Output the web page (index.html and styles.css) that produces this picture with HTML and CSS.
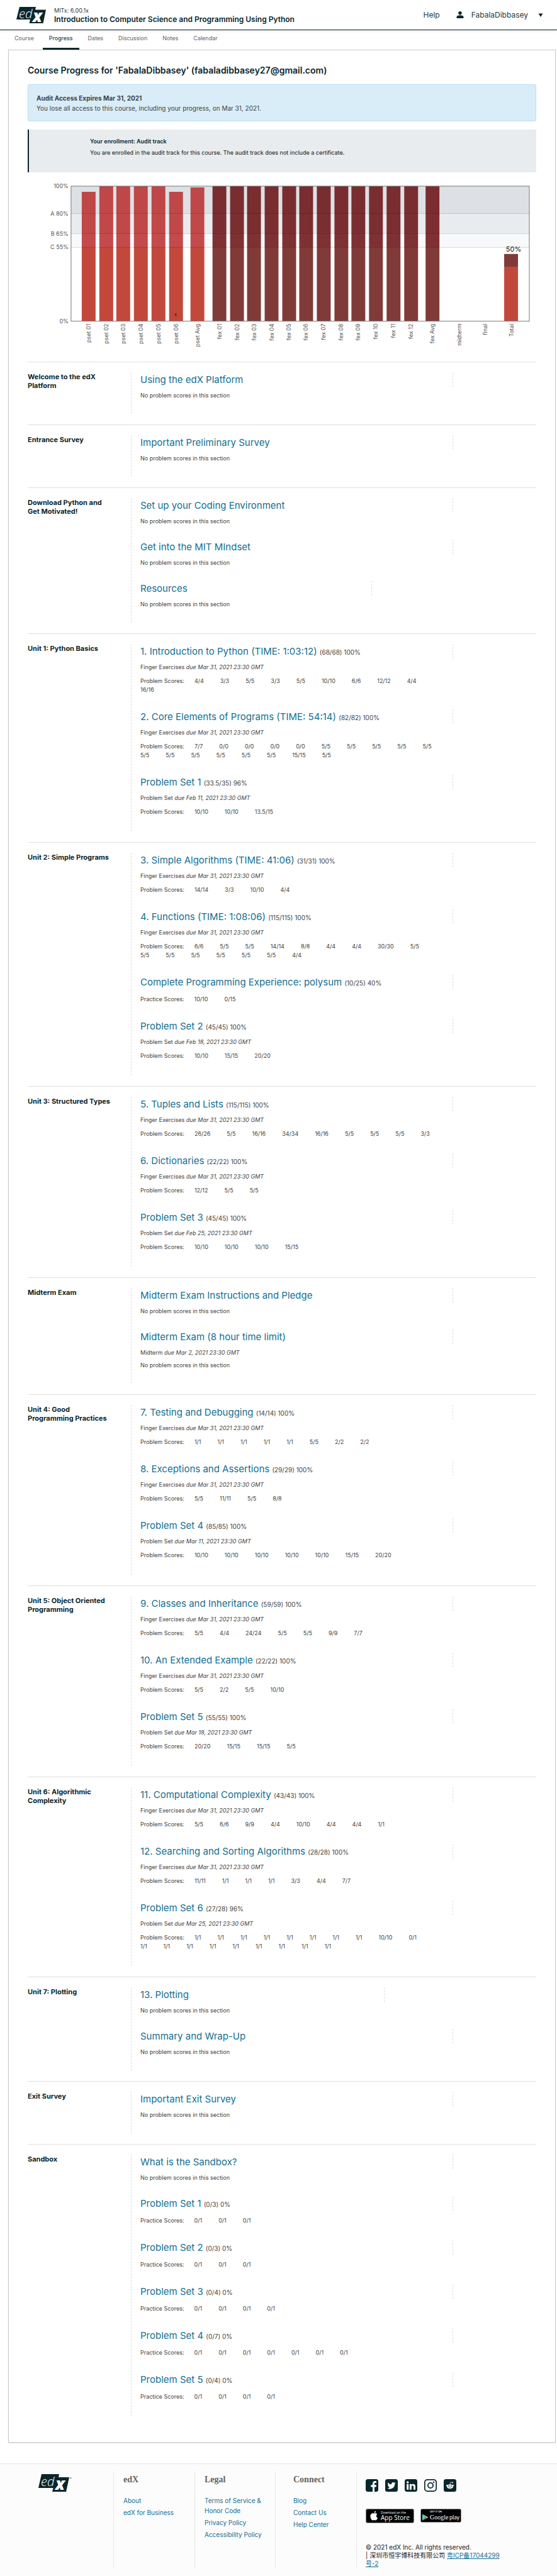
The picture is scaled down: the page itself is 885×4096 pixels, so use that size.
FILE: index.html
```html
<!DOCTYPE html>
<html lang="en">
<head>
<meta charset="utf-8">
<title>Progress | 6.00.1x | edX</title>
<meta name="viewport" content="width=device-width, initial-scale=1">
<link rel="stylesheet" href="styles.css">
</head>
<body>
<header class="site-header">
  <a class="logo" href="#" aria-label="edX home">
    <svg viewBox="0 0 47 26" width="47" height="26" aria-hidden="true">
      <path class="logo-shape" d="M5 0H31L30 4.500H47L42.500 26H20.500L22 20H0Z"/>
      <text class="logo-ed" x="4" y="17.500">ed</text>
      <text class="logo-x" x="26" y="23.500">x</text>
    </svg>
  </a>
  <div class="course-name">
    <span class="course-org">MITx: 6.00.1x</span>
    <span class="course-title">Introduction to Computer Science and Programming Using Python</span>
  </div>
  <a class="help" href="#">Help</a>
  <button class="user-menu" type="button">
    <svg viewBox="0 0 12 11" width="12" height="11" aria-hidden="true"><circle cx="6" cy="2.700" r="2.700"/><path d="M0.500 11V9C0.500 7 2.500 6.200 6 6.200S11.500 7 11.500 9V11Z"/></svg>
    <span>FabalaDibbasey</span>
    <svg class="caret" viewBox="0 0 8 6" width="8" height="6" aria-hidden="true"><path d="M0.500 0.500H7.500L4 6Z"/></svg>
  </button>
</header>
<nav class="tabs" aria-label="Course">
  <a href="#">Course</a>
  <a class="active" href="#" aria-current="page">Progress</a>
  <a href="#">Dates</a>
  <a href="#">Discussion</a>
  <a href="#">Notes</a>
  <a href="#">Calendar</a>
</nav>
<main class="panel">
  <h1>Course Progress for 'FabalaDibbasey' (fabaladibbasey27@gmail.com)</h1>
  <div class="alert">
    <strong>Audit Access Expires Mar 31, 2021</strong>
    <p>You lose all access to this course, including your progress, on Mar 31, 2021.</p>
  </div>
  <div class="enrollment">
    <h2>Your enrollment: Audit track</h2>
    <p>You are enrolled in the audit track for this course. The audit track does not include a certificate.</p>
  </div>
  <svg class="chart" viewBox="0 0 809 276" role="img" aria-label="Grade chart">
    <defs>
      <linearGradient id="red" gradientUnits="userSpaceOnUse" x1="0" y1="14" x2="0" y2="229">
        <stop offset=".2" stop-color="#bf4747"/><stop offset=".2" stop-color="#c14848"/><stop offset=".35" stop-color="#c14848"/><stop offset=".35" stop-color="#c44a4c"/><stop offset=".45" stop-color="#c44a4c"/><stop offset=".45" stop-color="#c3483c"/>
      </linearGradient>
      <linearGradient id="dark" gradientUnits="userSpaceOnUse" x1="0" y1="14" x2="0" y2="229">
        <stop offset=".2" stop-color="#792d2f"/><stop offset=".2" stop-color="#7b2e31"/><stop offset=".35" stop-color="#7b2e31"/><stop offset=".35" stop-color="#7f3033"/><stop offset=".45" stop-color="#7f3033"/><stop offset=".45" stop-color="#803b38"/>
      </linearGradient>
    </defs>
    <rect x="69" y="14" width="729" height="43" fill="#dde1e6"/>
    <rect x="69" y="57" width="729" height="32" fill="#e8ecee"/>
    <rect x="69" y="89" width="729" height="22" fill="#f8f9fb"/>
    <g fill="url(#red)">
      <rect x="86" y="23" width="22" height="206"/><rect x="114" y="14" width="22" height="215"/><rect x="141" y="14" width="22" height="215"/><rect x="169" y="14" width="22" height="215"/><rect x="197" y="14" width="22" height="215"/><rect x="225" y="23" width="22" height="206"/><rect x="259" y="16" width="22" height="213"/><rect x="758" y="143" width="22" height="86"/>
    </g>
    <g fill="url(#dark)">
      <rect x="294" y="14" width="22" height="215"/><rect x="322" y="14" width="22" height="215"/><rect x="349" y="14" width="22" height="215"/><rect x="377" y="14" width="22" height="215"/><rect x="405" y="14" width="22" height="215"/><rect x="432" y="14" width="22" height="215"/><rect x="460" y="14" width="22" height="215"/><rect x="488" y="14" width="22" height="215"/><rect x="515" y="14" width="22" height="215"/><rect x="543" y="14" width="22" height="215"/><rect x="571" y="14" width="22" height="215"/><rect x="599" y="14" width="22" height="215"/><rect x="633" y="14" width="22" height="215"/><rect x="758" y="122" width="22" height="21"/>
    </g>
    <path class="grid" d="M69 57.500H798M69 89.500H798M69 111.500H798"/>
    <rect class="frame" x="69" y="14" width="729" height="215"/>
    <path class="dropped" d="M234 216.500L237 220.500M237 216.500L234 220.500"/>
    <g class="axis">
      <text x="65" y="17">100%</text><text x="65" y="61">A 80%</text><text x="65" y="93">B 65%</text><text x="65" y="114">C 55%</text><text x="65" y="232">0%</text>
    </g>
    <g class="axis">
      <text transform="translate(100 233) rotate(-90)">pset 01</text><text transform="translate(128 233) rotate(-90)">pset 02</text><text transform="translate(155 233) rotate(-90)">pset 03</text><text transform="translate(183 233) rotate(-90)">pset 04</text><text transform="translate(211 233) rotate(-90)">pset 05</text><text transform="translate(239 233) rotate(-90)">pset 06</text><text transform="translate(273 233) rotate(-90)">pset Avg</text>
      <text transform="translate(308 233) rotate(-90)">fex 01</text><text transform="translate(336 233) rotate(-90)">fex 02</text><text transform="translate(363 233) rotate(-90)">fex 03</text><text transform="translate(391 233) rotate(-90)">fex 04</text><text transform="translate(419 233) rotate(-90)">fex 05</text><text transform="translate(446 233) rotate(-90)">fex 06</text><text transform="translate(474 233) rotate(-90)">fex 07</text><text transform="translate(502 233) rotate(-90)">fex 08</text><text transform="translate(529 233) rotate(-90)">fex 09</text><text transform="translate(557 233) rotate(-90)">fex 10</text><text transform="translate(585 233) rotate(-90)">fex 11</text><text transform="translate(613 233) rotate(-90)">fex 12</text><text transform="translate(647 233) rotate(-90)">fex Avg</text>
      <text transform="translate(690 233) rotate(-90)">midterm</text><text transform="translate(731 233) rotate(-90)">final</text><text transform="translate(773 233) rotate(-90)">Total</text>
    </g>
    <text class="total" x="773" y="118">50%</text>
  </svg>

  <section class="chapter">
    <h2>Welcome to the edX Platform</h2>
    <div class="chapter-body">
      <div class="item"><h3><a href="#">Using the edX Platform</a></h3><p class="none">No problem scores in this section</p></div>
    </div>
  </section>
  <section class="chapter">
    <h2>Entrance Survey</h2>
    <div class="chapter-body">
      <div class="item"><h3><a href="#">Important Preliminary Survey</a></h3><p class="none">No problem scores in this section</p></div>
    </div>
  </section>
  <section class="chapter">
    <h2>Download Python and <br>Get Motivated!</h2>
    <div class="chapter-body">
      <div class="item"><h3><a href="#">Set up your Coding Environment</a></h3><p class="none">No problem scores in this section</p></div>
      <div class="item"><h3><a href="#">Get into the MIT MIndset</a></h3><p class="none">No problem scores in this section</p></div>
      <div class="item"><h3 class="short"><a href="#">Resources</a></h3><p class="none">No problem scores in this section</p></div>
    </div>
  </section>
  <section class="chapter">
    <h2>Unit 1: Python Basics</h2>
    <div class="chapter-body">
      <div class="item"><h3><a href="#">1. Introduction to Python (TIME: 1:03:12)</a> <span>(68/68) 100%</span></h3><p class="due">Finger Exercises <em>due Mar 31, 2021 23:30 GMT</em></p>
        <dl class="scores"><dt>Problem Scores:</dt><dd>4/4</dd><dd>3/3</dd><dd>5/5</dd><dd>3/3</dd><dd>5/5</dd><dd>10/10</dd><dd>6/6</dd><dd>12/12</dd><dd>4/4</dd><dd>16/16</dd></dl></div>
      <div class="item"><h3><a href="#">2. Core Elements of Programs (TIME: 54:14)</a> <span>(82/82) 100%</span></h3><p class="due">Finger Exercises <em>due Mar 31, 2021 23:30 GMT</em></p>
        <dl class="scores"><dt>Problem Scores:</dt><dd>7/7</dd><dd>0/0</dd><dd>0/0</dd><dd>0/0</dd><dd>0/0</dd><dd>5/5</dd><dd>5/5</dd><dd>5/5</dd><dd>5/5</dd><dd>5/5</dd><dd>5/5</dd><dd>5/5</dd><dd>5/5</dd><dd>5/5</dd><dd>5/5</dd><dd>5/5</dd><dd>15/15</dd><dd>5/5</dd></dl></div>
      <div class="item"><h3><a href="#">Problem Set 1</a> <span>(33.5/35) 96%</span></h3><p class="due">Problem Set <em>due Feb 11, 2021 23:30 GMT</em></p>
        <dl class="scores"><dt>Problem Scores:</dt><dd>10/10</dd><dd>10/10</dd><dd>13.5/15</dd></dl></div>
    </div>
  </section>
  <section class="chapter">
    <h2>Unit 2: Simple Programs</h2>
    <div class="chapter-body">
      <div class="item"><h3><a href="#">3. Simple Algorithms (TIME: 41:06)</a> <span>(31/31) 100%</span></h3><p class="due">Finger Exercises <em>due Mar 31, 2021 23:30 GMT</em></p>
        <dl class="scores"><dt>Problem Scores:</dt><dd>14/14</dd><dd>3/3</dd><dd>10/10</dd><dd>4/4</dd></dl></div>
      <div class="item"><h3><a href="#">4. Functions (TIME: 1:08:06)</a> <span>(115/115) 100%</span></h3><p class="due">Finger Exercises <em>due Mar 31, 2021 23:30 GMT</em></p>
        <dl class="scores"><dt>Problem Scores:</dt><dd>6/6</dd><dd>5/5</dd><dd>5/5</dd><dd>14/14</dd><dd>8/8</dd><dd>4/4</dd><dd>4/4</dd><dd>30/30</dd><dd>5/5</dd><dd>5/5</dd><dd>5/5</dd><dd>5/5</dd><dd>5/5</dd><dd>5/5</dd><dd>5/5</dd><dd>4/4</dd></dl></div>
      <div class="item"><h3><a href="#">Complete Programming Experience: polysum</a> <span>(10/25) 40%</span></h3>
        <dl class="scores"><dt>Practice Scores:</dt><dd>10/10</dd><dd>0/15</dd></dl></div>
      <div class="item"><h3><a href="#">Problem Set 2</a> <span>(45/45) 100%</span></h3><p class="due">Problem Set <em>due Feb 18, 2021 23:30 GMT</em></p>
        <dl class="scores"><dt>Problem Scores:</dt><dd>10/10</dd><dd>15/15</dd><dd>20/20</dd></dl></div>
    </div>
  </section>
  <section class="chapter">
    <h2>Unit 3: Structured Types</h2>
    <div class="chapter-body">
      <div class="item"><h3><a href="#">5. Tuples and Lists</a> <span>(115/115) 100%</span></h3><p class="due">Finger Exercises <em>due Mar 31, 2021 23:30 GMT</em></p>
        <dl class="scores"><dt>Problem Scores:</dt><dd>26/26</dd><dd>5/5</dd><dd>16/16</dd><dd>34/34</dd><dd>16/16</dd><dd>5/5</dd><dd>5/5</dd><dd>5/5</dd><dd>3/3</dd></dl></div>
      <div class="item"><h3><a href="#">6. Dictionaries</a> <span>(22/22) 100%</span></h3><p class="due">Finger Exercises <em>due Mar 31, 2021 23:30 GMT</em></p>
        <dl class="scores"><dt>Problem Scores:</dt><dd>12/12</dd><dd>5/5</dd><dd>5/5</dd></dl></div>
      <div class="item"><h3><a href="#">Problem Set 3</a> <span>(45/45) 100%</span></h3><p class="due">Problem Set <em>due Feb 25, 2021 23:30 GMT</em></p>
        <dl class="scores"><dt>Problem Scores:</dt><dd>10/10</dd><dd>10/10</dd><dd>10/10</dd><dd>15/15</dd></dl></div>
    </div>
  </section>
  <section class="chapter">
    <h2>Midterm Exam</h2>
    <div class="chapter-body">
      <div class="item"><h3><a href="#">Midterm Exam Instructions and Pledge</a></h3><p class="none">No problem scores in this section</p></div>
      <div class="item"><h3><a href="#">Midterm Exam (8 hour time limit)</a></h3><p class="due">Midterm <em>due Mar 2, 2021 23:30 GMT</em></p><p class="none">No problem scores in this section</p></div>
    </div>
  </section>
  <section class="chapter">
    <h2>Unit 4: Good <br>Programming Practices</h2>
    <div class="chapter-body">
      <div class="item"><h3><a href="#">7. Testing and Debugging</a> <span>(14/14) 100%</span></h3><p class="due">Finger Exercises <em>due Mar 31, 2021 23:30 GMT</em></p>
        <dl class="scores"><dt>Problem Scores:</dt><dd>1/1</dd><dd>1/1</dd><dd>1/1</dd><dd>1/1</dd><dd>1/1</dd><dd>5/5</dd><dd>2/2</dd><dd>2/2</dd></dl></div>
      <div class="item"><h3><a href="#">8. Exceptions and Assertions</a> <span>(29/29) 100%</span></h3><p class="due">Finger Exercises <em>due Mar 31, 2021 23:30 GMT</em></p>
        <dl class="scores"><dt>Problem Scores:</dt><dd>5/5</dd><dd>11/11</dd><dd>5/5</dd><dd>8/8</dd></dl></div>
      <div class="item"><h3><a href="#">Problem Set 4</a> <span>(85/85) 100%</span></h3><p class="due">Problem Set <em>due Mar 11, 2021 23:30 GMT</em></p>
        <dl class="scores"><dt>Problem Scores:</dt><dd>10/10</dd><dd>10/10</dd><dd>10/10</dd><dd>10/10</dd><dd>10/10</dd><dd>15/15</dd><dd>20/20</dd></dl></div>
    </div>
  </section>
  <section class="chapter">
    <h2>Unit 5: Object Oriented Programming</h2>
    <div class="chapter-body">
      <div class="item"><h3><a href="#">9. Classes and Inheritance</a> <span>(59/59) 100%</span></h3><p class="due">Finger Exercises <em>due Mar 31, 2021 23:30 GMT</em></p>
        <dl class="scores"><dt>Problem Scores:</dt><dd>5/5</dd><dd>4/4</dd><dd>24/24</dd><dd>5/5</dd><dd>5/5</dd><dd>9/9</dd><dd>7/7</dd></dl></div>
      <div class="item"><h3><a href="#">10. An Extended Example</a> <span>(22/22) 100%</span></h3><p class="due">Finger Exercises <em>due Mar 31, 2021 23:30 GMT</em></p>
        <dl class="scores"><dt>Problem Scores:</dt><dd>5/5</dd><dd>2/2</dd><dd>5/5</dd><dd>10/10</dd></dl></div>
      <div class="item"><h3><a href="#">Problem Set 5</a> <span>(55/55) 100%</span></h3><p class="due">Problem Set <em>due Mar 18, 2021 23:30 GMT</em></p>
        <dl class="scores"><dt>Problem Scores:</dt><dd>20/20</dd><dd>15/15</dd><dd>15/15</dd><dd>5/5</dd></dl></div>
    </div>
  </section>
  <section class="chapter">
    <h2>Unit 6: Algorithmic Complexity</h2>
    <div class="chapter-body">
      <div class="item"><h3><a href="#">11. Computational Complexity</a> <span>(43/43) 100%</span></h3><p class="due">Finger Exercises <em>due Mar 31, 2021 23:30 GMT</em></p>
        <dl class="scores"><dt>Problem Scores:</dt><dd>5/5</dd><dd>6/6</dd><dd>9/9</dd><dd>4/4</dd><dd>10/10</dd><dd>4/4</dd><dd>4/4</dd><dd>1/1</dd></dl></div>
      <div class="item"><h3><a href="#">12. Searching and Sorting Algorithms</a> <span>(28/28) 100%</span></h3><p class="due">Finger Exercises <em>due Mar 31, 2021 23:30 GMT</em></p>
        <dl class="scores"><dt>Problem Scores:</dt><dd>11/11</dd><dd>1/1</dd><dd>1/1</dd><dd>1/1</dd><dd>3/3</dd><dd>4/4</dd><dd>7/7</dd></dl></div>
      <div class="item"><h3><a href="#">Problem Set 6</a> <span>(27/28) 96%</span></h3><p class="due">Problem Set <em>due Mar 25, 2021 23:30 GMT</em></p>
        <dl class="scores"><dt>Problem Scores:</dt><dd>1/1</dd><dd>1/1</dd><dd>1/1</dd><dd>1/1</dd><dd>1/1</dd><dd>1/1</dd><dd>1/1</dd><dd>1/1</dd><dd>10/10</dd><dd>0/1</dd><dd>1/1</dd><dd>1/1</dd><dd>1/1</dd><dd>1/1</dd><dd>1/1</dd><dd>1/1</dd><dd>1/1</dd><dd>1/1</dd><dd>1/1</dd></dl></div>
    </div>
  </section>
  <section class="chapter">
    <h2>Unit 7: Plotting</h2>
    <div class="chapter-body">
      <div class="item"><h3 class="medium"><a href="#">13. Plotting</a></h3><p class="none">No problem scores in this section</p></div>
      <div class="item"><h3><a href="#">Summary and Wrap-Up</a></h3><p class="none">No problem scores in this section</p></div>
    </div>
  </section>
  <section class="chapter">
    <h2>Exit Survey</h2>
    <div class="chapter-body">
      <div class="item"><h3><a href="#">Important Exit Survey</a></h3><p class="none">No problem scores in this section</p></div>
    </div>
  </section>
  <section class="chapter">
    <h2>Sandbox</h2>
    <div class="chapter-body">
      <div class="item"><h3><a href="#">What is the Sandbox?</a></h3><p class="none">No problem scores in this section</p></div>
      <div class="item"><h3><a href="#">Problem Set 1</a> <span>(0/3) 0%</span></h3><dl class="scores"><dt>Practice Scores:</dt><dd>0/1</dd><dd>0/1</dd><dd>0/1</dd></dl></div>
      <div class="item"><h3><a href="#">Problem Set 2</a> <span>(0/3) 0%</span></h3><dl class="scores"><dt>Practice Scores:</dt><dd>0/1</dd><dd>0/1</dd><dd>0/1</dd></dl></div>
      <div class="item"><h3><a href="#">Problem Set 3</a> <span>(0/4) 0%</span></h3><dl class="scores"><dt>Practice Scores:</dt><dd>0/1</dd><dd>0/1</dd><dd>0/1</dd><dd>0/1</dd></dl></div>
      <div class="item"><h3><a href="#">Problem Set 4</a> <span>(0/7) 0%</span></h3><dl class="scores"><dt>Practice Scores:</dt><dd>0/1</dd><dd>0/1</dd><dd>0/1</dd><dd>0/1</dd><dd>0/1</dd><dd>0/1</dd><dd>0/1</dd></dl></div>
      <div class="item"><h3><a href="#">Problem Set 5</a> <span>(0/4) 0%</span></h3><dl class="scores"><dt>Practice Scores:</dt><dd>0/1</dd><dd>0/1</dd><dd>0/1</dd><dd>0/1</dd></dl></div>
    </div>
  </section>
</main>
<footer class="site-footer">
  <div class="footer-logo">
    <a class="logo" href="#" aria-label="edX home">
      <svg viewBox="0 0 54 28" width="54" height="28" aria-hidden="true">
        <path class="logo-shape" d="M5 0H33L32 5H49L44 28H22L23.500 22H0Z"/>
        <text class="logo-ed" x="4" y="19">ed</text>
        <text class="logo-x" x="27" y="25">x</text>
        <text class="logo-r" x="50" y="8">®</text>
      </svg>
    </a>
  </div>
  <nav class="footer-col" aria-label="edX">
    <h2>edX</h2>
    <a href="#">About</a>
    <a href="#">edX for Business</a>
  </nav>
  <nav class="footer-col" aria-label="Legal">
    <h2>Legal</h2>
    <a href="#">Terms of Service &amp; Honor Code</a>
    <a href="#">Privacy Policy</a>
    <a href="#">Accessibility Policy</a>
  </nav>
  <nav class="footer-col indent" aria-label="Connect">
    <h2>Connect</h2>
    <a href="#">Blog</a>
    <a href="#">Contact Us</a>
    <a href="#">Help Center</a>
  </nav>
  <div class="footer-info">
    <div class="social">
      <a href="#" aria-label="Facebook"><svg viewBox="0 0 20 20"><rect width="20" height="20" rx="3.500"/><path class="w" d="M11 20V12.500H8.300V9.300H11V7C11 4.300 12.700 3 15 3H17V6H15.500C14.300 6 14 6.600 14 7.500V9.300H17L16.500 12.500H14V20Z"/></svg></a>
      <a href="#" aria-label="Twitter"><svg viewBox="0 0 20 20"><rect width="20" height="20" rx="3.500"/><path class="w" d="M16.700 6.200a5 5 0 0 1-1.500.4 2.600 2.600 0 0 0 1.100-1.500 5 5 0 0 1-1.700.7 2.700 2.700 0 0 0-4.600 2.400A7.600 7.600 0 0 1 4.400 5.400a2.700 2.700 0 0 0 .8 3.600 2.700 2.700 0 0 1-1.200-.3 2.700 2.700 0 0 0 2.200 2.700 2.700 2.700 0 0 1-1.200 0 2.700 2.700 0 0 0 2.500 1.900 5.400 5.400 0 0 1-4 1.100 7.600 7.600 0 0 0 11.700-6.800 5 5 0 0 0 1.500-1.400Z"/></svg></a>
      <a href="#" aria-label="LinkedIn"><svg viewBox="0 0 20 20"><rect width="20" height="20" rx="3.500"/><circle class="w" cx="4.700" cy="5" r="1.700"/><path class="w" d="M3.200 7.800H6.200V16.700H3.200ZM7.900 7.800H10.800V9C12.500 6.800 17 7.200 17 11.300V16.700H14V12C14 9.500 10.900 9.600 10.900 12V16.700H7.900Z"/></svg></a>
      <a href="#" aria-label="Instagram"><svg viewBox="0 0 20 20"><rect width="20" height="20" rx="5"/><rect class="w" x="1.700" y="1.700" width="16.600" height="16.600" rx="3.500"/><circle cx="10" cy="10" r="5"/><circle class="w" cx="10" cy="10" r="3.200"/><circle cx="15" cy="4.900" r="1.200"/></svg></a>
      <a href="#" aria-label="Reddit"><svg viewBox="0 0 20 20"><rect width="20" height="20" rx="3.500"/><ellipse class="w" cx="10" cy="11.800" rx="4.900" ry="3.600"/><circle class="w" cx="5.200" cy="9.900" r="1.200"/><circle class="w" cx="14.800" cy="9.900" r="1.200"/><circle class="w" cx="14" cy="5.400" r="1"/><path class="line" d="M10 8.500L10.800 4.700L14 5.400"/><circle cx="8.100" cy="11" r=".9"/><circle cx="11.900" cy="11" r=".9"/><path class="mouth" d="M8 13.400Q10 14.800 12 13.400"/></svg></a>
    </div>
    <div class="stores">
      <a href="#" aria-label="Download on the App Store"><svg viewBox="0 0 77 23" width="77" height="23"><rect class="badge" x=".5" y=".5" width="76" height="22" rx="2"/><path class="w" d="M15.800 6.100C15.700 4.700 16.600 3.600 15.700 3.700C14.400 4 13.300 5.300 13.500 6.600C14.700 6.700 15.700 6 15.800 6.100ZM18.300 8.500C17 6.800 15 7 13.600 7.600C12 7 9.700 6.900 8.200 9C6.500 11.700 8 16.500 10.400 18.200C11.600 18.900 12.500 18 13.600 18C14.700 18 15.500 18.900 16.700 18.200C17.700 17.500 18.600 15.800 19 14.700C16.500 13.500 16.500 9.900 18.300 8.500Z"/><text class="store-small" x="24" y="8">Download on the</text><text class="store-app" x="24" y="18">App Store</text></svg></a>
      <a href="#" aria-label="Get it on Google play"><svg viewBox="0 0 65 22" width="65" height="22"><rect class="badge" x=".5" y=".5" width="64" height="21" rx="2"/><path fill="#4fd0c8" d="M3 8.500V19L8.500 13.700Z"/><path fill="#8fd8a8" d="M3 8.500L10 12.200L8.500 13.700Z"/><path fill="#f0c560" d="M8.500 13.700L10 12.200L12.500 13.700L10 15.200Z"/><path fill="#e0526a" d="M3 19L8.500 13.700L10 15.200Z"/><text class="store-get" x="15" y="6">GET IT ON</text><text class="store-google" x="15" y="17">Google</text><text class="store-play" x="46" y="17">play</text></svg></a>
    </div>
    <p class="copyright">© 2021 edX Inc. All rights reserved.<br>| <span lang="zh">深圳市恒宇博科技有限公司</span> <a href="#" lang="zh">粤ICP备17044299号-2</a></p>
  </div>
</footer>
</body>
</html>
```
FILE: styles.css
```css
* { box-sizing: border-box; }

body {
  margin: 0;
  background: #fff;
  color: #414141;
  font: 9px/14px Inter, "Liberation Sans", "Noto Sans CJK SC", sans-serif;
}

h1, h2, h3, p, dl, dd { margin: 0; }
a { color: #126f93; text-decoration: none; }
svg { overflow: visible; }

/* Header */
.site-header {
  display: flex;
  align-items: center;
  height: 48px;
  padding: 0 22px 0 26px;
  border-bottom: 1px solid #0a262d;
  box-shadow: 0 1px 4px rgba(0, 0, 0, .12);
  color: #1f3a41;
}
.logo { display: block; line-height: 0; }
.logo-shape { fill: #0a262d; }
.logo-ed, .logo-x { fill: #fff; font-family: "Open Sans", sans-serif; font-style: italic; }
.logo-ed { font-size: 20px; font-weight: 300; }
.logo-x { font-size: 26px; font-weight: 800; }
.logo-r { fill: #0a262d; font-size: 4px; }
.course-name { display: flex; flex-direction: column; flex: 1; margin-left: 13px; }
.course-org { font-size: 9px; line-height: 13px; }
.course-title { color: #0a262d; font-size: 12px; line-height: 15px; font-weight: 600; }
.help { color: #1f3a41; font-size: 12px; }
.user-menu {
  display: flex;
  align-items: center;
  margin-left: 26px;
  padding: 0;
  border: 0;
  background: none;
  color: inherit;
  font: 12px/14px Inter, sans-serif;
}
.user-menu svg { fill: #0a262d; }
.user-menu span { margin: 0 16px 0 12px; }

/* Tabs */
.tabs { display: flex; gap: 4px; padding-left: 13px; }
.tabs a { padding: 6px 10px 8px; border-bottom: 3px solid transparent; color: #5e6264; }
.tabs .active { border-color: #0a262d; color: #0a262d; }

/* Panel */
.panel {
  margin: 0 2px 33px 13px;
  padding: 23px 30px 24px;
  border: 1px solid #c8c8c8;
  box-shadow: 0 1px 2px rgba(0, 0, 0, .1);
}
h1 { margin-bottom: 13px; color: #0a262d; font-size: 14px; line-height: 18px; font-weight: 600; }
.alert {
  margin-bottom: 13px;
  padding: 13px 13px 12px;
  border: 1px solid #bcdff1;
  border-radius: 3px;
  background: #d9edf8;
  font-size: 10px;
  line-height: 16px;
}
.alert strong { display: block; font-weight: 700; }
.enrollment {
  margin-bottom: 8px;
  padding: 12px 16px 24px 97px;
  border-left: 2px solid #0a262d;
  background: #e8ecee;
  color: #111;
}
.enrollment h2 { margin-bottom: 4px; color: #0a262d; font-size: 9px; font-weight: 600; }

/* Grade chart */
.chart { display: block; width: 100%; margin-bottom: 17px; }
.grid { stroke: #000; stroke-opacity: .16; }
.frame { fill: none; stroke: #777; }
.dropped { stroke: #222; }
.axis text { fill: #545454; font-size: 9px; text-anchor: end; }
.total { fill: #111; font-size: 11px; text-anchor: middle; }

/* Chapters */
.chapter {
  display: grid;
  grid-template-columns: 164px 1fr;
  padding: 16px 0 17px;
  border-top: 1px solid #e0e0e0;
}
.chapter > h2 { padding-right: 18px; color: #0a262d; font-size: 11px; line-height: 14px; font-weight: 700; }
.chapter-body { padding-left: 14px; border-left: 1px dashed #ddd; }
.item { width: 79%; }
h3 { border-right: 1px dashed #ddd; font-size: 15px; line-height: 23px; font-weight: 400; }
h3 span { font-size: 10px; line-height: 10px; }
.short { width: 74%; }
.medium { width: 78%; }
.due, .none { padding-top: 7px; }
.none { padding-bottom: 22px; }
.due + .none { padding-top: 6px; }
.scores { display: flex; flex-wrap: wrap; padding: 9px 0 24px; }
.due + .scores { padding-top: 8px; }
.scores dt { margin-right: 16px; }
.scores dd { margin-right: 26px; }

/* Footer */
.site-footer {
  display: grid;
  grid-template-columns: 129px 129px 128px 129px 1fr;
  padding: 13px 51px 14px;
  border-top: 1px solid #e2e2e2;
  background: #fcfcfc;
}
.footer-logo { padding: 3px 10px; }
.footer-col, .footer-info { border-left: 1px solid #e7e7e7; }
.footer-col { display: flex; flex-direction: column; gap: 3px; padding: 3px 12px 3px 15px; font-size: 10px; line-height: 16px; }
.footer-col.indent { padding-left: 28px; }
.footer-col h2 { margin-bottom: 14px; color: #646464; font: 700 14px/17px "Liberation Serif", serif; }
.footer-info { padding: 11px 32px 0 14px; }
.social { display: flex; gap: 11px; }
.social svg { display: block; width: 20px; height: 20px; fill: #0a262d; }
.social .w, .stores .w { fill: #fff; }
.social .line { fill: none; stroke: #fff; stroke-width: .6; }
.social .mouth { fill: none; stroke: #0a262d; stroke-width: .6; }
.stores { display: flex; align-items: center; gap: 10px; margin: 27px 0 32px; }
.stores svg { display: block; }
.badge { fill: #000; stroke: #999; stroke-width: .5; }
.stores text { fill: #fff; }
.store-small { font: 5px "Open Sans", sans-serif; }
.store-app { font: 10px "Open Sans", sans-serif; }
.store-get { font: 600 4px Lato, sans-serif; }
.store-google { font: 10px "Liberation Serif", serif; }
.store-play { font: 9px Lato, sans-serif; }
.copyright { color: #222; font-size: 10px; line-height: 13px; }
.copyright a { text-decoration: underline; }
```
